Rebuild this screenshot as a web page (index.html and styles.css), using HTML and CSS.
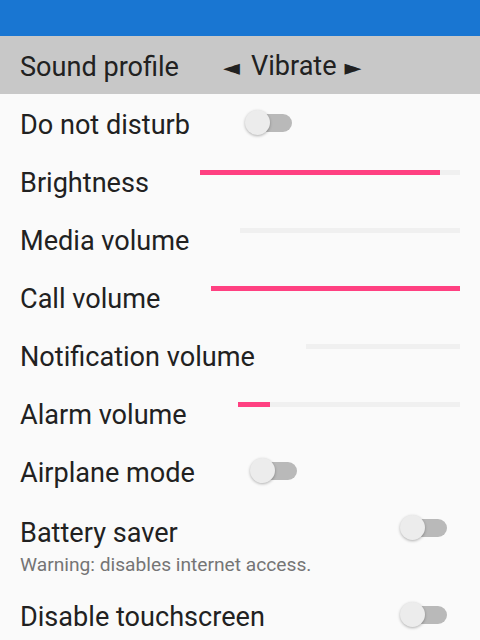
FILE: index.html
```html
<!DOCTYPE html>
<html lang="en">
<head>
  <meta charset="UTF-8" />
  <meta name="viewport" content="width=device-width, initial-scale=1.0" />
  <title>Settings</title>
  <link rel="stylesheet" href="styles.css">
</head>
<body>
  <div class="appbar"></div>

  <div class="row profile">
    <span class="label">Sound profile</span>
    <span class="picker"><span class="arrow prev">◄</span>Vibrate<span class="arrow next">►</span></span>
  </div>

  <div class="row">
    <span class="label">Do not disturb</span>
    <span class="switch"><span class="track"></span><span class="thumb"></span></span>
  </div>

  <div class="row">
    <span class="label">Brightness</span>
    <div class="slider"><div class="fill" style="width: 92.3%"></div></div>
  </div>

  <div class="row">
    <span class="label">Media volume</span>
    <div class="slider"><div class="fill" style="width: 0%"></div></div>
  </div>

  <div class="row">
    <span class="label">Call volume</span>
    <div class="slider"><div class="fill" style="width: 100%"></div></div>
  </div>

  <div class="row">
    <span class="label">Notification volume</span>
    <div class="slider"><div class="fill" style="width: 0%"></div></div>
  </div>

  <div class="row">
    <span class="label">Alarm volume</span>
    <div class="slider"><div class="fill" style="width: 14.4%"></div></div>
  </div>

  <div class="row">
    <span class="label">Airplane mode</span>
    <span class="switch"><span class="track"></span><span class="thumb"></span></span>
  </div>

  <div class="row tall">
    <div class="text">
      <div class="label">Battery saver</div>
      <div class="hint">Warning: disables internet access.</div>
    </div>
    <span class="switch end"><span class="track"></span><span class="thumb"></span></span>
  </div>

  <div class="row">
    <span class="label">Disable touchscreen</span>
    <span class="switch end"><span class="track"></span><span class="thumb"></span></span>
  </div>
</body>
</html>
```

FILE: styles.css
```css
body {
  margin: 0;
  background: #fafafa;
  font-family: Roboto, 'Noto Sans', sans-serif;
  color: #212121;
  overflow: hidden;
}
.appbar {
  height: 36px;
  background: #1976d2;
}
.row {
  display: flex;
  align-items: center;
  height: 58px;
  padding: 0 20px;
}
.label {
  font-size: 27.1px;
  line-height: 32px;
  padding-top: 4px;
  white-space: nowrap;
}
.profile {
  background: #c8c8c8;
}
.picker {
  margin-left: 44px;
  font-size: 27.1px;
  line-height: 32px;
  padding-top: 4px;
}
.arrow {
  font-family: 'DejaVu Sans', sans-serif;
  font-size: 22px;
}
.arrow.prev {
  margin-right: 11px;
}
.arrow.next {
  margin-left: 8px;
}
.slider {
  flex: 1;
  height: 5px;
  margin-left: 51px;
  margin-bottom: 17px;
  background: #f0f0f0;
}
.fill {
  height: 100%;
  background: #ff4081;
}
.switch {
  position: relative;
  width: 47px;
  height: 26px;
  margin-left: 55px;
}
.switch.end {
  margin-left: auto;
  margin-right: 13px;
}
.track {
  position: absolute;
  right: 0;
  top: 4px;
  width: 36px;
  height: 18px;
  border-radius: 9px;
  background: #b9b9b9;
}
.thumb {
  position: absolute;
  left: 0;
  top: 0;
  width: 25px;
  height: 25px;
  border-radius: 50%;
  background: #ececec;
  box-shadow: 0 1px 3px rgba(0,0,0,0.3);
}
.tall {
  height: 86px;
  align-items: flex-start;
  box-sizing: border-box;
  padding-top: 13px;
}
.tall .switch {
  margin-top: 2px;
}
.hint {
  margin-top: 3px;
  font-size: 19.2px;
  line-height: 26px;
  color: #757575;
}
```
